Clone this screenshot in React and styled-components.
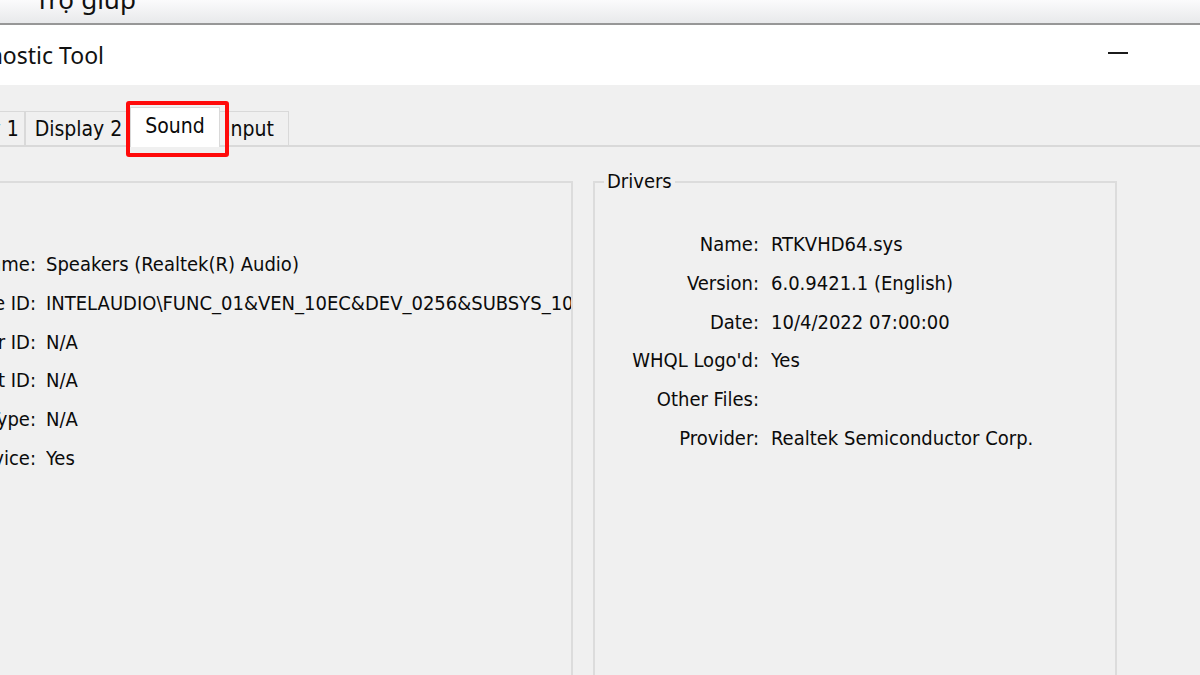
import React from 'react';
import styled, { createGlobalStyle } from 'styled-components';

const GlobalStyle = createGlobalStyle`
  html, body {
    margin: 0;
    padding: 0;
    background: #f0f0f0;
  }
  #root {
    width: 1200px;
    height: 675px;
  }
`;

const Screen = styled.div`
  position: relative;
  width: 1200px;
  height: 675px;
  overflow: hidden;
  display: flex;
  flex-direction: column;
  background: #f0f0f0;
  color: #0b0b0b;
  font-family: "DejaVu Sans Condensed", "DejaVu Sans", sans-serif;
`;

const MenuBar = styled.div`
  flex: none;
  height: 23px;
  display: flex;
  padding-left: 35px;
  overflow: hidden;
  background: linear-gradient(#fbfbfc, #e8e9eb);
  border-bottom: 2px solid #979797;
`;

const MenuItem = styled.span`
  margin-top: -14px;
  font-family: "Noto Sans", sans-serif;
  font-size: 26px;
  line-height: 26px;
  color: #111;
  white-space: nowrap;
`;

const TitleBar = styled.div`
  flex: none;
  height: 60px;
  display: flex;
  align-items: center;
  justify-content: space-between;
  background: #fff;
`;

const TitleText = styled.div`
  width: 104px;
  display: flex;
  justify-content: flex-end;
  font-family: "Noto Sans", sans-serif;
  font-size: 23px;
  color: #111;
  white-space: nowrap;
`;

const MinimizeButton = styled.div`
  width: 20px;
  height: 2px;
  margin-right: 72px;
  margin-top: -4px;
  background: #1b1b1b;
`;

const TabArea = styled.div`
  position: relative;
  flex: none;
  display: flex;
  align-items: flex-end;
  padding-top: 26px;
  border-bottom: 2px solid #d9d9d9;
`;

const Tab = styled.div`
  box-sizing: border-box;
  flex: none;
  width: ${p => p.$width}px;
  height: ${p => (p.$active ? 40 : 34)}px;
  margin-left: ${p => p.$offset || 0}px;
  margin-right: ${p => (p.$active ? -2 : 0)}px;
  margin-top: ${p => (p.$active ? -4 : 0)}px;
  margin-bottom: ${p => (p.$active ? -2 : 0)}px;
  padding: ${p => (p.$active ? 6 : 0)}px ${p => p.$padRight || 0}px 0 0;
  display: flex;
  align-items: ${p => (p.$active ? 'flex-start' : 'center')};
  justify-content: center;
  border: 1px solid #d9d9d9;
  border-bottom: none;
  background: ${p => (p.$active ? '#fff' : '#f0f0f0')};
  position: relative;
  z-index: ${p => (p.$active ? 1 : 0)};
  font-size: 21px;
  white-space: nowrap;
  overflow: hidden;
`;

const Highlight = styled.div`
  position: absolute;
  left: 126px;
  top: 16px;
  width: 103px;
  height: 56px;
  box-sizing: border-box;
  border: 4px solid #ff0a0a;
  border-radius: 3px;
  z-index: 5;
  pointer-events: none;
`;

const Panel = styled.div`
  flex: none;
  display: flex;
  gap: 20px;
  margin-left: -200px;
  padding-top: 23px;
`;

const Group = styled.fieldset`
  box-sizing: border-box;
  flex: none;
  width: ${p => p.$width}px;
  min-height: 560px;
  min-width: 0;
  margin: 0;
  padding: ${p => p.$top}px 0 0 0;
  border: 2px solid #dcdcdc;
`;

const Legend = styled.legend`
  margin-left: 9px;
  padding: 0 3px;
  font-size: 20px;
  line-height: 23px;
`;

const Rows = styled.div`
  display: grid;
  grid-template-columns: ${p => p.$label}px minmax(0, 1fr);
  column-gap: ${p => p.$gap}px;
  grid-auto-rows: 38.7px;
  align-items: center;
  font-size: 20px;
`;

const Label = styled.div`
  display: flex;
  justify-content: flex-end;
  white-space: nowrap;
`;

const Value = styled.div`
  white-space: nowrap;
  overflow: hidden;
`;

const deviceRows = [
  ['Name:', 'Speakers (Realtek(R) Audio)'],
  ['Hardware ID:', 'INTELAUDIO\\FUNC_01&VEN_10EC&DEV_0256&SUBSYS_10280A20&REV_1000'],
  ['Manufacturer ID:', 'N/A'],
  ['Product ID:', 'N/A'],
  ['Type:', 'N/A'],
  ['Default Device:', 'Yes'],
];

const driverRows = [
  ['Name:', 'RTKVHD64.sys'],
  ['Version:', '6.0.9421.1 (English)'],
  ['Date:', '10/4/2022 07:00:00'],
  ["WHQL Logo'd:", 'Yes'],
  ['Other Files:', ''],
  ['Provider:', 'Realtek Semiconductor Corp.'],
];

const tabs = [
  { name: 'Display 1', width: 100, offset: -75 },
  { name: 'Display 2', width: 107 },
  { name: 'Sound', width: 90, offset: -2, active: true },
  { name: 'Input', width: 71, padRight: 8 },
];

const InfoRows = ({ rows, label, gap }) => (
  <Rows $label={label} $gap={gap}>
    {rows.map(([k, v]) => (
      <React.Fragment key={k}>
        <Label>{k}</Label>
        <Value>{v}</Value>
      </React.Fragment>
    ))}
  </Rows>
);

const App = () => (
  <Screen>
    <GlobalStyle />
    <MenuBar>
      <MenuItem>Trợ giúp</MenuItem>
    </MenuBar>
    <TitleBar>
      <TitleText>DirectX Diagnostic Tool</TitleText>
      <MinimizeButton />
    </TitleBar>
    <TabArea>
      {tabs.map(t => (
        <Tab
          key={t.name}
          $width={t.width}
          $offset={t.offset}
          $active={t.active}
          $padRight={t.padRight}
        >
          {t.name}
        </Tab>
      ))}
      <Highlight />
    </TabArea>
    <Panel>
      <Group $width={773} $top={52}>
        <Legend>Device</Legend>
        <InfoRows rows={deviceRows} label={234} gap={10} />
      </Group>
      <Group $width={524} $top={32}>
        <Legend>Drivers</Legend>
        <InfoRows rows={driverRows} label={164} gap={12} />
      </Group>
    </Panel>
  </Screen>
);

export default App;
